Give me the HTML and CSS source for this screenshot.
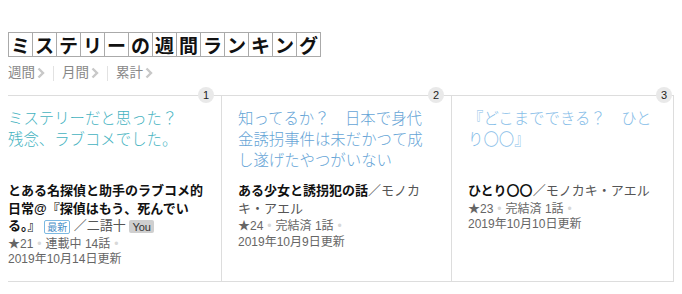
FILE: index.html
```html
<!DOCTYPE html>
<html lang="ja">
<head>
<meta charset="utf-8">
<title>ミステリーの週間ランキング</title>
<link rel="stylesheet" href="styles.css">
</head>
<body>
<h2 class="heading"><span>ミ</span><span>ス</span><span>テ</span><span>リ</span><span>ー</span><span>の</span><span>週</span><span>間</span><span>ラ</span><span>ン</span><span>キ</span><span>ン</span><span>グ</span></h2>
<nav class="tabs">
  <a class="tab">週間<svg class="chev" viewBox="0 0 8 12" width="8" height="12"><polyline points="1.5,1.5 6,6 1.5,10.5"/></svg></a>
  <span class="sep"></span>
  <a class="tab">月間<svg class="chev" viewBox="0 0 8 12" width="8" height="12"><polyline points="1.5,1.5 6,6 1.5,10.5"/></svg></a>
  <span class="sep"></span>
  <a class="tab">累計<svg class="chev" viewBox="0 0 8 12" width="8" height="12"><polyline points="1.5,1.5 6,6 1.5,10.5"/></svg></a>
</nav>
<div class="ranking">
  <div class="card card-1">
    <span class="rank">1</span>
    <p class="catch catch-1">ミステリーだと思った？<br>残念、ラブコメでした。</p>
    <p class="book"><b>とある名探偵と助手のラブコメ的日常@『探偵はもう、死んでいる。』</b> <span class="tag-new">最新</span> <span class="author">／二語十</span> <span class="tag-you">You</span></p>
    <p class="meta">★21<span class="dot">•</span>連載中 14話<span class="dot">•</span><br>2019年10月14日更新</p>
  </div>
  <div class="card card-2">
    <span class="rank">2</span>
    <p class="catch catch-2">知ってるか？　日本で身代金誘拐事件は未だかつて成し遂げたやつがいない</p>
    <p class="book"><b>ある少女と誘拐犯の話</b><span class="author">／モノカキ・アエル</span></p>
    <p class="meta">★24<span class="dot">•</span>完結済 1話<span class="dot">•</span><br>2019年10月9日更新</p>
  </div>
  <div class="card card-3">
    <span class="rank">3</span>
    <p class="catch catch-3">『どこまでできる？　ひとり〇〇』</p>
    <p class="book"><b>ひとり〇〇</b><span class="author">／モノカキ・アエル</span></p>
    <p class="meta">★23<span class="dot">•</span>完結済 1話<span class="dot">•</span><br>2019年10月10日更新</p>
  </div>
</div>
</body>
</html>
```
FILE: styles.css
```css
body {
  margin: 8px;
  background: #fff;
  font-family: "Liberation Sans", "Noto Sans CJK JP", sans-serif;
  color: #333;
}
.heading {
  display: inline-flex;
  margin: 24px 0 0;
  border-left: 1px solid #aaa;
  font-family: "Noto Sans CJK JP", sans-serif;
  font-weight: 700;
  font-size: 19px;
  line-height: 23px;
  color: #111;
}
.heading span {
  box-sizing: border-box;
  width: 24px;
  height: 25px;
  border: 1px solid #aaa;
  border-left: 0;
  text-align: center;
}
.tabs {
  display: flex;
  align-items: center;
  margin-top: 8px;
  height: 16px;
  font-size: 13.5px;
  line-height: 16px;
  color: #888;
}
.tab {
  display: flex;
  align-items: center;
}
.chev {
  margin-left: 2px;
  fill: none;
  stroke: #c8c8c8;
  stroke-width: 2.4;
}
.sep {
  width: 1px;
  height: 15px;
  background: #e2e2e2;
  margin: 0 8px 0 8px;
}
.ranking {
  display: flex;
  margin-top: 14px;
}
.card {
  position: relative;
  box-sizing: border-box;
  height: 187px;
  padding: 12px 16px 0 16px;
  border-top: 1px solid #ddd;
  border-bottom: 1px solid #ddd;
  border-right: 1px solid #ddd;
}
.card-1 { width: 214px; padding-left: 0; }
.card-2 { width: 230px; }
.card-3 { width: 222px; }
.rank {
  position: absolute;
  top: -9px;
  right: 7px;
  width: 16px;
  height: 16px;
  border-radius: 50%;
  background: #e9e9e9;
  font-size: 11px;
  line-height: 16px;
  text-align: center;
  color: #222;
}
.card-3 .rank { right: 1px; }
.catch {
  margin: 0;
  height: 63px;
  font-family: "Liberation Serif", "Noto Sans CJK JP", serif;
  font-size: 15.4px;
  line-height: 21px;
  font-weight: 300;
}
.catch-1 { color: #45b3bf; }
.catch-2 { color: #65a4d6; }
.catch-3 { color: #86bde8; }
.book {
  margin: 11px 0 0;
  font-size: 13px;
  line-height: 17.5px;
  color: #555;
}
.book b {
  color: #111;
  font-weight: 700;
}
.tag-new {
  display: inline-block;
  font-size: 10px;
  line-height: 11px;
  padding: 1px 2px 0;
  border: 1px solid #7cb9e2;
  border-radius: 2px;
  color: #4a90c8;
  vertical-align: middle;
}
.tag-you {
  display: inline-block;
  font-size: 11px;
  line-height: 12px;
  padding: 1px 3px 0;
  background: #cfcfcf;
  border-radius: 2px;
  color: #333;
  vertical-align: middle;
}
.author { color: #555; }
.meta {
  margin: 2px 0 0;
  font-size: 12px;
  line-height: 15.5px;
  color: #666;
}
.dot {
  color: #d8d8d8;
  margin: 0 4px;
}
```
